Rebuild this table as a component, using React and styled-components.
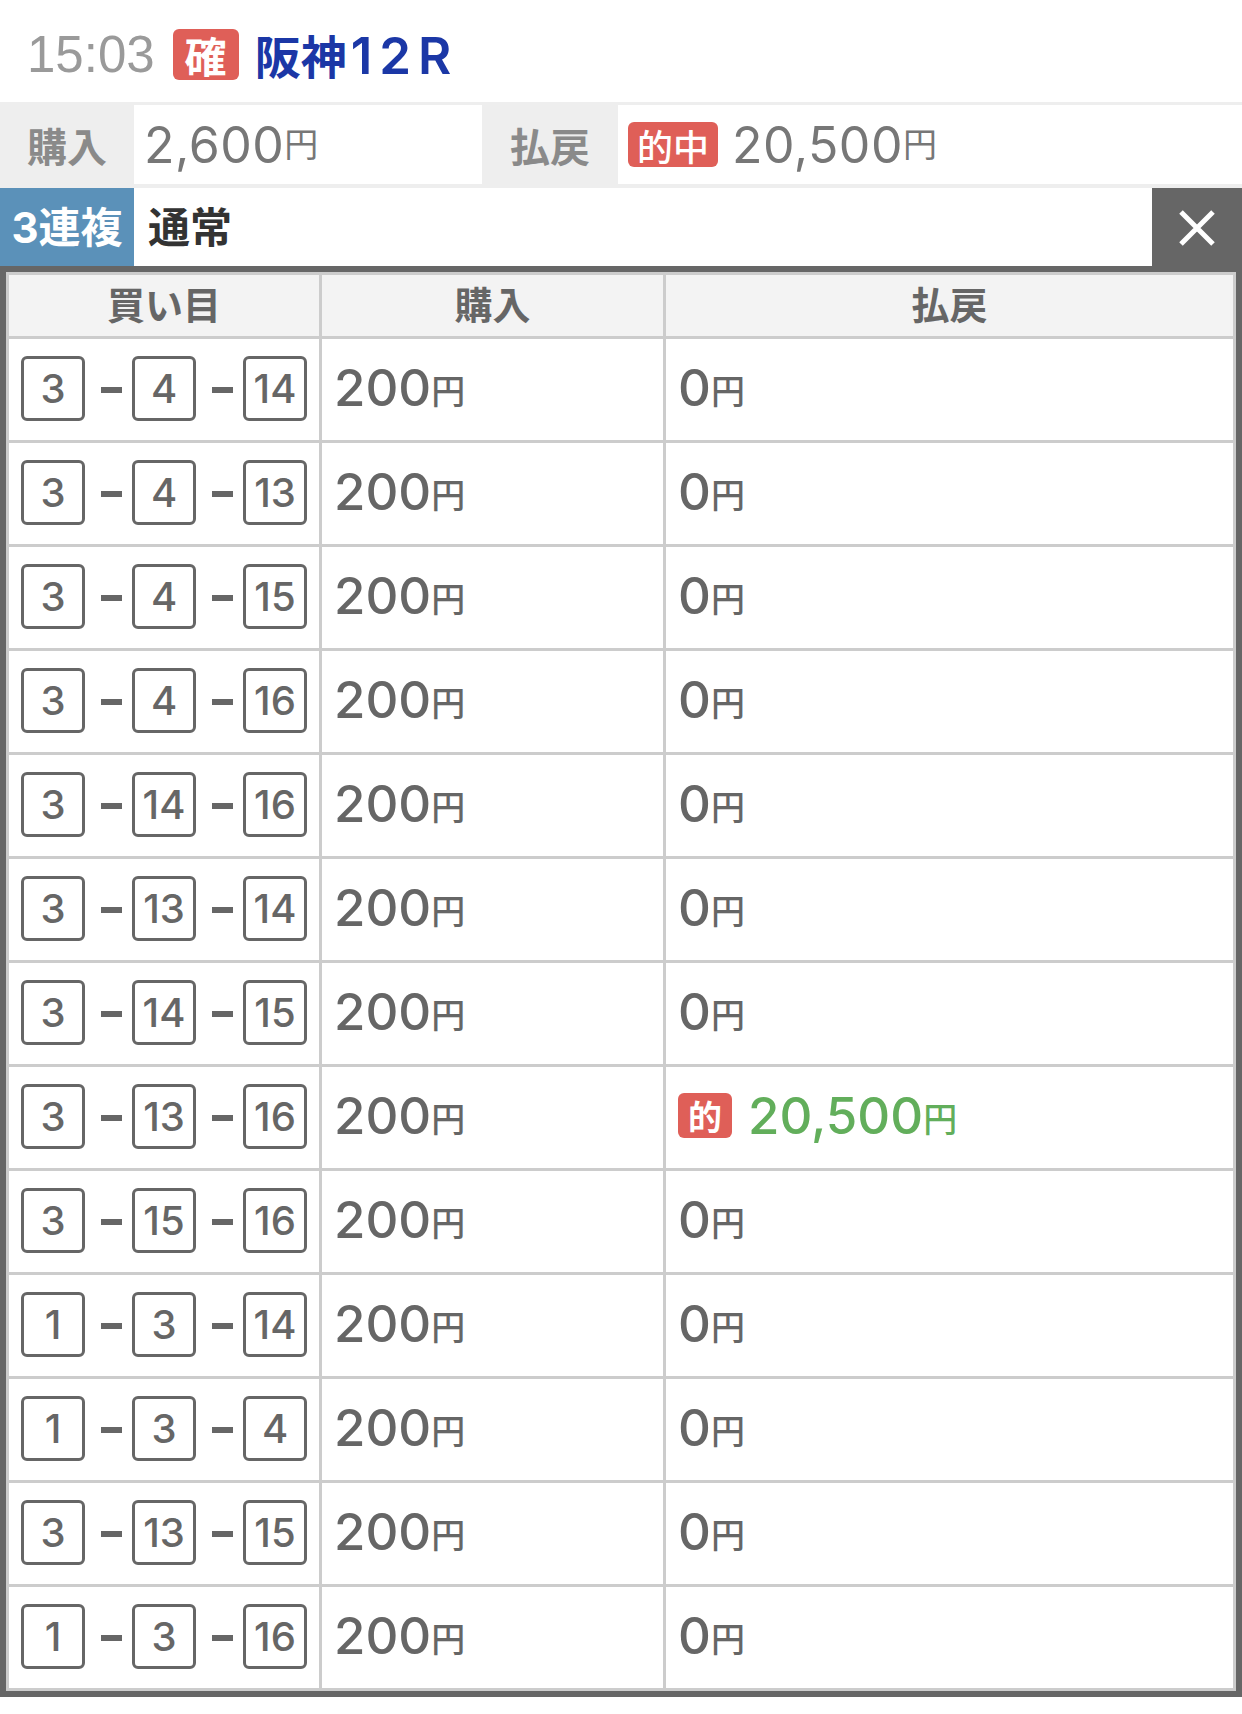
import styled, { createGlobalStyle } from 'styled-components'

const GlobalStyle = createGlobalStyle`
    body {
        margin: 0;
        background: #fff;
        font-family: 'Inter', 'Noto Sans CJK JP', sans-serif;
    }
`

const rows = [
    { nums: [3, 4, 14], pay: 0 },
    { nums: [3, 4, 13], pay: 0 },
    { nums: [3, 4, 15], pay: 0 },
    { nums: [3, 4, 16], pay: 0 },
    { nums: [3, 14, 16], pay: 0 },
    { nums: [3, 13, 14], pay: 0 },
    { nums: [3, 14, 15], pay: 0 },
    { nums: [3, 13, 16], pay: 20500, hit: true },
    { nums: [3, 15, 16], pay: 0 },
    { nums: [1, 3, 14], pay: 0 },
    { nums: [1, 3, 4], pay: 0 },
    { nums: [3, 13, 15], pay: 0 },
    { nums: [1, 3, 16], pay: 0 },
]

function CloseIcon() {
    return (
        <svg width="38" height="38" viewBox="0 0 38 38">
            <path d="M3 3 L35 35 M35 3 L3 35" stroke="#fff" strokeWidth="5" fill="none" />
        </svg>
    )
}

function App() {
    return (
        <Page>
            <GlobalStyle />
            <TopBar>
                <Time>15:03</Time>
                <ConfirmBadge>確</ConfirmBadge>
                <RaceTitle>阪神<RaceNo>12R</RaceNo></RaceTitle>
            </TopBar>

            <Summary>
                <SummaryLabel>購入</SummaryLabel>
                <SummaryValue>
                    <Amount>2,600</Amount><Yen>円</Yen>
                </SummaryValue>
                <SummaryLabel>払戻</SummaryLabel>
                <SummaryValue>
                    <HitBadge>的中</HitBadge>
                    <Amount>20,500</Amount><Yen>円</Yen>
                </SummaryValue>
            </Summary>

            <TypeRow>
                <BetType>3連複</BetType>
                <BetMode>通常</BetMode>
                <CloseButton><CloseIcon /></CloseButton>
            </TypeRow>

            <Table>
                <HeadCell>買い目</HeadCell>
                <HeadCell>購入</HeadCell>
                <HeadCell>払戻</HeadCell>
                {rows.map((row, i) => (
                    <Row key={i}>
                        <PickCell>
                            {row.nums.map((n, j) => (
                                <Pick key={j}>
                                    {j > 0 && <Dash />}
                                    <NumBox>{n}</NumBox>
                                </Pick>
                            ))}
                        </PickCell>
                        <MoneyCell>
                            <Money>200</Money><SmallYen>円</SmallYen>
                        </MoneyCell>
                        <MoneyCell>
                            {row.hit ? (
                                <>
                                    <RowHitBadge>的</RowHitBadge>
                                    <Money win>{row.pay.toLocaleString('en-US')}</Money>
                                    <SmallYen win>円</SmallYen>
                                </>
                            ) : (
                                <>
                                    <Money>{row.pay}</Money><SmallYen>円</SmallYen>
                                </>
                            )}
                        </MoneyCell>
                    </Row>
                ))}
            </Table>
        </Page>
    )
}

export default App

const Page = styled.div`
    width: 1242px;
`

const TopBar = styled.div`
    height: 102px;
    box-sizing: border-box;
    padding: 6px 0 0 27px;
    display: flex;
    align-items: center;
`

const Time = styled.span`
    font-family: 'Liberation Sans', sans-serif;
    font-size: 51px;
    color: #9a9a9a;
`

const ConfirmBadge = styled.span`
    margin-left: 18px;
    width: 66px;
    height: 51px;
    border-radius: 6px;
    background: #df5f58;
    color: #fff;
    font-size: 42px;
    font-weight: 700;
    display: flex;
    align-items: center;
    justify-content: center;
`

const RaceTitle = styled.span`
    margin-left: 16px;
    font-size: 46px;
    font-weight: 700;
    color: #1b37a6;
    display: flex;
    align-items: baseline;
`

const RaceNo = styled.span`
    font-size: 51px;
    font-weight: 600;
    letter-spacing: 7px;
    margin-left: 4px;
`

const Summary = styled.div`
    background: #eeeeee;
    padding: 3px 0 4px;
    display: grid;
    grid-template-columns: 134px 348px 136px 1fr;
    height: 79px;
`

const SummaryLabel = styled.div`
    display: flex;
    align-items: center;
    justify-content: center;
    font-size: 40px;
    font-weight: 700;
    color: #8a8a8a;
`

const SummaryValue = styled.div`
    background: #fff;
    display: flex;
    align-items: center;
    padding-left: 10px;
    color: #777;
`

const Amount = styled.span`
    font-size: 50px;
    letter-spacing: 0.5px;
`

const Yen = styled.span`
    font-size: 34px;
    align-self: flex-end;
    margin-bottom: 17px;
`

const HitBadge = styled.span`
    width: 90px;
    height: 45px;
    border-radius: 6px;
    background: #df5f58;
    color: #fff;
    font-size: 36px;
    font-weight: 500;
    display: flex;
    align-items: center;
    justify-content: center;
    margin-right: 14px;
`

const TypeRow = styled.div`
    height: 78px;
    box-sizing: border-box;
    display: flex;
`

const BetType = styled.div`
    width: 134px;
    background: #5b91b9;
    color: #fff;
    font-size: 42px;
    font-weight: 700;
    display: flex;
    align-items: center;
    justify-content: center;
    padding-bottom: 6px;
`

const BetMode = styled.div`
    flex: 1;
    padding: 0 0 6px 14px;
    color: #333;
    font-size: 42px;
    font-weight: 700;
    display: flex;
    align-items: center;
`

const CloseButton = styled.div`
    width: 90px;
    background: #666;
    display: flex;
    align-items: center;
    justify-content: center;
    padding-top: 2px;
`

const Table = styled.div`
    display: grid;
    grid-template-columns: 310px 341px 1fr;
    gap: 3px;
    padding: 3px;
    background: #cccccc;
    border: 6px solid #666;
    box-shadow: 0 3px 0 #d2d2d2;
`

const HeadCell = styled.div`
    height: 61px;
    box-sizing: border-box;
    padding-bottom: 7px;
    background: #f3f3f3;
    display: flex;
    align-items: center;
    justify-content: center;
    font-size: 38px;
    font-weight: 700;
    color: #666;
`

const Row = styled.div`
    display: contents;
`

const PickCell = styled.div`
    height: 101px;
    background: #fff;
    display: flex;
    align-items: center;
    padding-left: 12px;
`

const Pick = styled.div`
    display: flex;
    align-items: center;
`

const Dash = styled.span`
    width: 21px;
    height: 6px;
    background: #666;
    margin: 0 10px 0 16px;
`

const NumBox = styled.span`
    box-sizing: border-box;
    width: 64px;
    height: 65px;
    border: 3px solid #666;
    border-radius: 6px;
    display: flex;
    align-items: center;
    justify-content: center;
    font-size: 40px;
    font-weight: 500;
    color: #666;
    margin-top: -2px;
`

const MoneyCell = styled.div`
    height: 101px;
    background: #fff;
    display: flex;
    align-items: center;
    padding-left: 12px;
`

const Money = styled.span`
    font-size: 51px;
    font-weight: 500;
    color: ${({ win }) => (win ? '#62ae5b' : '#666')};
    margin-top: -4px;
`

const SmallYen = styled.span`
    font-size: 34px;
    font-weight: 500;
    color: ${({ win }) => (win ? '#62ae5b' : '#666')};
    align-self: flex-end;
    margin-bottom: 26px;
`

const RowHitBadge = styled.span`
    width: 54px;
    height: 45px;
    border-radius: 6px;
    background: #df5f58;
    color: #fff;
    font-size: 34px;
    font-weight: 700;
    display: flex;
    align-items: center;
    justify-content: center;
    margin-right: 16px;
    margin-top: -4px;
`
